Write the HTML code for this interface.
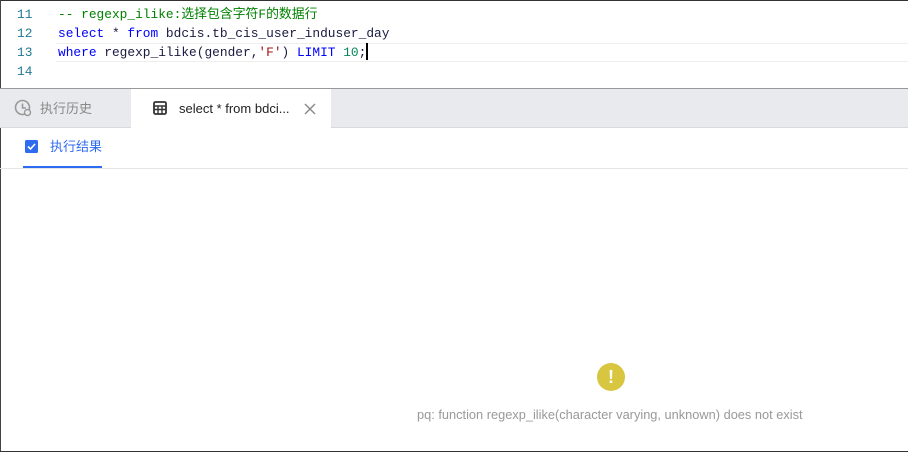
<!DOCTYPE html>
<html><head><meta charset="utf-8"><style>
body{margin:0;width:908px;height:452px;overflow:hidden;background:#fff;position:relative;font-family:"Liberation Sans","Noto Sans CJK SC",sans-serif}
.top{position:absolute;left:0;top:0;width:908px;height:1px;background:#333}
.bot{position:absolute;left:0;top:451px;width:908px;height:1px;background:#333}
.lft{position:absolute;left:0;top:0;width:1px;height:452px;background:#444}
.code{position:absolute;left:0;top:5px;font-family:"Liberation Mono","Noto Sans CJK SC",monospace;font-size:12.85px}
.ln{height:19px;line-height:19px;position:relative;white-space:pre}
.n{position:absolute;left:17px;color:#237893}
.t{position:absolute;left:58px;color:#1a1a40}
.hl{position:absolute;left:56px;top:43px;width:852px;height:17px;border-top:1px solid #eee;border-bottom:1px solid #eee}
.k{color:#0000ff}.c{color:#008000}.s{color:#a31515}.m{color:#098658}
.tabs{position:absolute;left:0;top:88px;width:908px;height:38px;background:#e9eaed;border-top:1px solid #999;border-bottom:1px solid #d9d9d9}
.tab{position:absolute;top:0;height:39px;line-height:40px;font-size:13px}
.res{position:absolute;left:23px;top:128px;width:79px;height:38px;border-bottom:2px solid #2f6bf0;color:#2f6bf0;font-size:13px;line-height:38px}
.sep{position:absolute;left:0;top:168px;width:908px;height:1px;background:#e5e5e5}
.warn{position:absolute;left:597px;top:363px;width:28px;height:28px;border-radius:50%;background:#d8c640;color:#fff;text-align:center;line-height:28px;font-weight:bold;font-size:18px}
.msg{position:absolute;left:417px;top:407px;font-size:12.8px;color:#999}
</style></head><body>
<div class="top"></div><div class="lft"></div>
<div class="hl"></div>
<div class="code">
<div class="ln"><span class="n">11</span><span class="t c">-- regexp_ilike:选择包含字符F的数据行</span></div>
<div class="ln"><span class="n">12</span><span class="t"><span class="k">select</span> * <span class="k">from</span> bdcis.tb_cis_user_induser_day</span></div>
<div class="ln"><span class="n">13</span><span class="t"><span class="k">where</span> regexp_ilike(gender,<span class="s">'F'</span>) <span class="k">LIMIT</span> <span class="m">10</span>;<span style="display:inline-block;width:2px;height:17px;background:#000;vertical-align:-4px"></span></span></div>
<div class="ln"><span class="n">14</span></div>
</div>
<div class="tabs">
<div class="tab" style="left:14px;color:#888"><svg width="18" height="18" viewBox="0 0 18 18" style="vertical-align:-4px;margin-right:8px"><circle cx="8.5" cy="8.5" r="7" fill="none" stroke="#999" stroke-width="1.6"/><path d="M8.5 4.5V9H12" fill="none" stroke="#999" stroke-width="1.6"/><circle cx="13.5" cy="13.5" r="3" fill="#e9eaed" stroke="#999" stroke-width="1.4"/></svg>执行历史</div>
<div class="tab" style="left:131px;width:200px;background:#fff;color:#222"><svg width="14" height="14" viewBox="0 0 14 14" style="vertical-align:-2px;margin:0 12px 0 22px"><rect x="1" y="1" width="12" height="12" rx="1.5" fill="none" stroke="#333" stroke-width="1.8"/><path d="M1 5H13M1 8.5H13M5 5V13M9 5V13" stroke="#333" stroke-width="1.4"/></svg>select * from bdci...<svg width="12" height="12" viewBox="0 0 12 12" style="position:absolute;left:173px;top:14px"><path d="M1 1L11 11M11 1L1 11" stroke="#888" stroke-width="1.4"/></svg></div>
</div>
<div class="res"><svg width="13" height="13" viewBox="0 0 13 13" style="vertical-align:-2px;margin:0 12px 0 2px"><rect width="13" height="13" rx="1.5" fill="#2f6bf0"/><path d="M3 6.5l2.5 2.5 4.5-5" fill="none" stroke="#fff" stroke-width="1.6"/></svg>执行结果</div>
<div class="sep"></div>
<div class="warn">!</div>
<div class="msg">pq: function regexp_ilike(character varying, unknown) does not exist</div>
<div class="bot"></div>
</body></html>
